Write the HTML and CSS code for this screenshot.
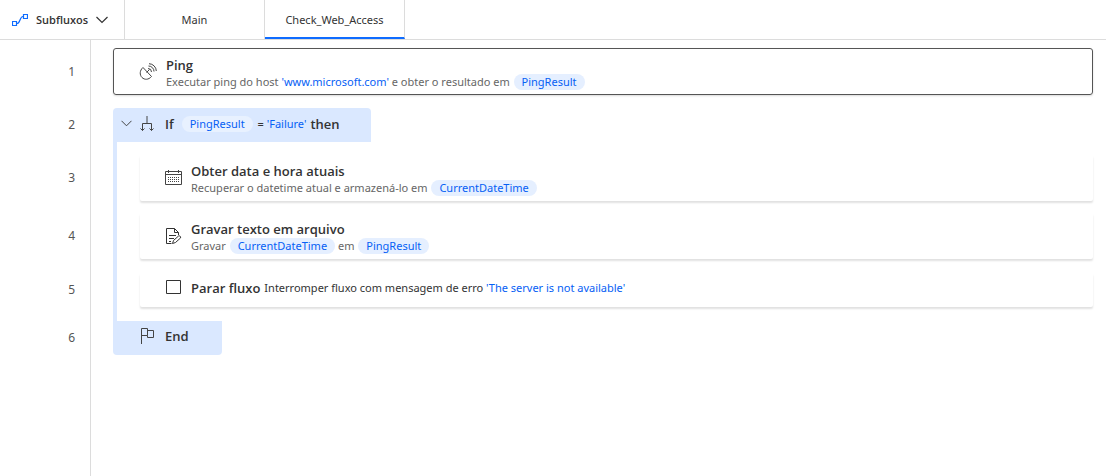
FILE: index.html
```
<!DOCTYPE html>
<html lang="pt-BR">
<head>
<meta charset="utf-8">
<meta name="viewport" content="width=device-width, initial-scale=1">
<title>Check_Web_Access</title>
<link rel="stylesheet" href="styles.css">
</head>
<body>
<nav class="tabs">
  <button class="subflows" type="button">
    <svg class="icon" width="16" height="14" viewBox="0 0 16 14" fill="none" stroke="#0f6cff"><path d="M.5 8.500h4v4h-4zM11.500 1.500h4v4h-4z" stroke-width="1.200"/><path d="M5 10.500c3.500 0 2.500-7 6-7" stroke-width="1.200"/></svg>
    <span>Subfluxos</span>
    <svg class="icon" width="12" height="8" viewBox="0 0 12 8" fill="none" stroke="#333" stroke-width="1.200"><path d="M.5 1 6 6.500 11.500 1"/></svg>
  </button>
  <button class="tab" type="button">Main</button>
  <button class="tab tab-active" type="button">Check_Web_Access</button>
</nav>
<main class="flow">
  <section class="row row-first">
    <div class="number">1</div>
    <div class="lane">
      <article class="card card-selected">
        <svg class="icon" width="18" height="18" viewBox="0 0 18 18" fill="none" stroke="#444"><path d="M4 4.500C.5 7.500.5 12 3 14.500c2.500 2.500 6.500 2.500 9.500-1zM7.500 9.500l3-3"/><path d="M9 5.500a3.500 3.500 0 0 1 3.500 3.500M9.500 3a5.500 5.500 0 0 1 5.500 5.500M10 .7a7.500 7.500 0 0 1 7.300 7.300"/></svg>
        <div class="body">
          <h2 class="title">Ping</h2>
          <p class="desc">Executar ping do host <span class="value">'www.microsoft.com'</span> e obter o resultado em <span class="pill">PingResult</span></p>
        </div>
      </article>
    </div>
  </section>
  <section class="row">
    <div class="number">2</div>
    <div class="lane">
      <div class="block block-if">
        <button class="toggle" type="button" aria-label="Recolher"><svg class="icon" width="11" height="7" viewBox="0 0 11 7" fill="none" stroke="#444"><path d="m.5.8 5 5 5-5"/></svg></button>
        <svg class="icon" width="14" height="16" viewBox="0 0 14 16" fill="none" stroke="#444"><path d="M7 0v7M2.500 14.500v-7h9v7M.5 12.500l2 2 2-2M9.500 12.500l2 2 2-2"/></svg>
        <h2 class="title">If</h2>
        <p class="condition"><span class="pill pill-light">PingResult</span> <span class="equals">=</span> <span class="value">'Failure'</span></p>
        <span class="title">then</span>
      </div>
    </div>
  </section>
  <section class="row row-nested-first">
    <div class="number">3</div>
    <div class="lane lane-nested">
      <article class="card">
        <svg class="icon" width="17" height="16" viewBox="0 0 17 16" fill="none" stroke="#444"><path d="M.5 1.500h16v13H.5zM.5 4.500h16M3.500 0v3M13.500 0v3"/><path d="M3 7.500h11M3 9.500h11M3 11.500h11" stroke-dasharray="1 1"/></svg>
        <div class="body">
          <h2 class="title">Obter data e hora atuais</h2>
          <p class="desc">Recuperar o datetime atual e armazená-lo em <span class="pill">CurrentDateTime</span></p>
        </div>
      </article>
    </div>
  </section>
  <section class="row row-nested">
    <div class="number">4</div>
    <div class="lane lane-nested">
      <article class="card">
        <svg class="icon" width="17" height="17" viewBox="0 0 17 17" fill="none" stroke="#333"><path d="M6.500 15.500h-5V.5h8l4 4V7M9.500.5v4h4M4 7.500h7M4 10.500h5M4 13.500h2M7.500 15.500l1-3 5-4.500c1.500-.5 2.500.7 2 2l-5 4.500z"/></svg>
        <div class="body">
          <h2 class="title">Gravar texto em arquivo</h2>
          <p class="desc">Gravar <span class="pill">CurrentDateTime</span> em <span class="pill">PingResult</span></p>
        </div>
      </article>
    </div>
  </section>
  <section class="row row-nested-last">
    <div class="number">5</div>
    <div class="lane lane-nested">
      <article class="card card-single">
        <svg class="icon" width="17" height="15" viewBox="0 0 17 15" fill="none" stroke="#333"><path d="M1.500.5h14v13h-14z"/></svg>
        <div class="body body-inline">
          <h2 class="title">Parar fluxo</h2>
          <p class="desc desc-dark">Interromper fluxo com mensagem de erro <span class="value">'The server is not available'</span></p>
        </div>
      </article>
    </div>
  </section>
  <section class="row">
    <div class="number">6</div>
    <div class="lane">
      <div class="block block-end">
        <svg class="icon" width="14" height="18" viewBox="0 0 14 18" fill="none" stroke="#444"><path d="M1.500 17V1.500h6v7h-6M7.500 3.500h6v7h-6v-2"/></svg>
        <h2 class="title">End</h2>
      </div>
    </div>
  </section>
  <div class="rest"></div>
</main>
</body>
</html>
```
FILE: styles.css
```
* { box-sizing: border-box; }

body {
  margin: 0;
  min-height: 100vh;
  display: flex;
  flex-direction: column;
  background: #fff;
  color: #333;
  font-family: "Segoe UI", "Noto Sans", sans-serif;
  font-size: 11px;
  line-height: 16px;
}

button {
  margin: 0;
  padding: 0;
  border: 0;
  background: none;
  color: inherit;
  font: inherit;
}

h2, p { margin: 0; }

.icon { display: block; flex: none; }

.tabs {
  display: flex;
  height: 40px;
  border-bottom: 1px solid #dcdcdc;
}

.subflows {
  display: flex;
  align-items: center;
  gap: 8px;
  width: 125px;
  padding-left: 12px;
  border-right: 1px solid #dcdcdc;
  font-family: "Segoe UI", "Open Sans", sans-serif;
  font-weight: 600;
}

.tab {
  width: 140px;
  border-right: 1px solid #dcdcdc;
}

.tab-active {
  padding-top: 2px;
  border-bottom: 2px solid #0f6cff;
}

.flow {
  flex: 1;
  display: flex;
  flex-direction: column;
}

.row { display: flex; }

.number {
  width: 91px;
  padding-right: 15px;
  border-right: 1px solid #dcdcdc;
  display: flex;
  align-items: center;
  justify-content: flex-end;
  color: #555;
  font-size: 12px;
}

.rest {
  flex: 1;
  width: 91px;
  border-right: 1px solid #dcdcdc;
}

.lane {
  flex: 1;
  margin-left: 22px;
  margin-right: 13px;
}

.lane-nested {
  padding-left: 23px;
  border-left: 4px solid #dae8ff;
}

.row-first .number,
.row-first .lane { padding-top: 8px; padding-bottom: 13px; }

.row-nested-first .number,
.row-nested-first .lane { padding-top: 13px; padding-bottom: 6px; }

.row-nested .number,
.row-nested .lane { padding-top: 6px; padding-bottom: 6px; }

.row-nested-last .number,
.row-nested-last .lane { padding-top: 8px; padding-bottom: 14px; }

.card {
  display: flex;
  align-items: center;
  gap: 9px;
  min-height: 46px;
  padding-left: 25px;
  border-radius: 2px;
  box-shadow: 0 2px 2px rgba(0, 0, 0, 0.12);
}

.card .body { padding-top: 2px; }

.card-selected {
  min-height: 47px;
  border: 1px solid #555;
  border-radius: 3px;
  box-shadow: 0 1px 2px rgba(0, 0, 0, 0.15);
}

.card-single {
  min-height: 34px;
  padding-bottom: 5px;
}

.body-inline {
  display: flex;
  align-items: center;
  gap: 4px;
}

.card .body-inline { padding-top: 0; }

.title {
  font-family: "Segoe UI", "Open Sans", sans-serif;
  font-size: 13px;
  font-weight: 600;
  line-height: 18px;
}

.desc { color: #666; }

.desc-dark { color: #333; }

.value { color: #0560f5; }

.pill {
  display: inline-block;
  margin-left: 1px;
  padding: 0 8px;
  border-radius: 8px;
  background: #e5efff;
  color: #0560f5;
}

.pill-light { background: #e8f1ff; }

.block {
  display: flex;
  align-items: center;
  height: 34px;
  background: #dae8ff;
}

.block-if {
  width: 258px;
  padding-left: 8px;
  padding-bottom: 3px;
  border-radius: 4px 4px 0 0;
}

.block-if .toggle { margin-right: 8px; }
.block-if .icon + .title { margin-right: 7px; }

.block .icon + .title { margin-left: 11px; }

.condition { margin-right: 4px; }

.equals { margin-left: 2px; }

.block-end {
  width: 109px;
  padding-left: 27px;
  padding-bottom: 4px;
  border-radius: 0 0 4px 4px;
}
```
